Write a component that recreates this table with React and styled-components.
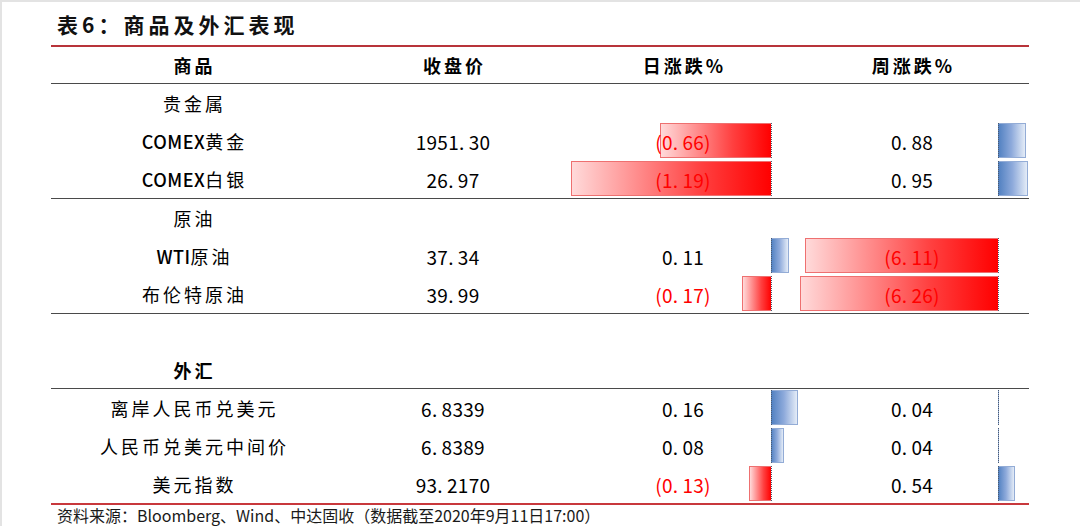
import React from "react";
import styled, { createGlobalStyle } from "styled-components";

const GlobalStyle = createGlobalStyle`
  html, body { margin: 0; padding: 0; background: #ffffff; }
  body { font-family: "Noto Sans CJK SC", "Noto Sans", sans-serif; color: #000; }
  * { box-sizing: border-box; }
`;

const COLS = "284px 236px 224px 234px";
const DAY_AXIS = 200;
const DAY_SCALE = 168;
const WEEK_AXIS = 203;
const WEEK_SCALE = 31.6;

const Page = styled.div`
  width: 1080px;
  height: 526px;
  overflow: hidden;
  border-top: 2px solid #e3e3e3;
  border-left: 2px solid #e3e3e3;
  padding-left: 49px;
  display: flex;
  flex-direction: column;
`;

const Title = styled.div`
  height: 43px;
  display: flex;
  align-items: center;
  padding-left: 6px;
  font-size: 21px;
  font-weight: 700;
  letter-spacing: 4px;
  color: #111;
`;

const Table = styled.div`
  width: 978px;
  border-top: 2px solid #b8343a;
  border-bottom: 2px solid #c8383c;
  display: flex;
  flex-direction: column;
`;

const HeaderRow = styled.div`
  display: grid;
  grid-template-columns: ${COLS};
  height: 37px;
  border-bottom: 1px solid #4a4a4a;
  align-items: center;
`;

const HeadCell = styled.div`
  text-align: center;
  font-size: 18px;
  font-weight: 700;
  letter-spacing: 3px;
  padding-left: 3px;
`;

const Section = styled.div`
  display: flex;
  flex-direction: column;
  border-bottom: ${(p) => (p.$last ? "none" : "1px solid #4a4a4a")};
`;

const Row = styled.div`
  display: grid;
  grid-template-columns: ${COLS};
  height: ${(p) => p.$h}px;
  align-items: stretch;
`;

const LabelCell = styled.div`
  display: flex;
  align-items: center;
  justify-content: center;
  font-size: 18px;
  font-weight: ${(p) => (p.$bold ? 700 : 400)};
  letter-spacing: 3px;
  padding-left: 3px;
`;

const Latin = styled.span`
  letter-spacing: 0.5px;
  font-weight: 500;
`;

const NumCell = styled.div`
  position: relative;
  display: flex;
  align-items: center;
  justify-content: center;
  font-size: 19px;
  letter-spacing: 0.3px;
  color: ${(p) => (p.$neg ? "#ff0000" : "#000")};
`;

const NumText = styled.span`
  position: relative;
  z-index: 2;
`;

const Dot = styled.span`
  margin-right: 4px;
`;

const Bar = styled.div`
  position: absolute;
  top: 1px;
  bottom: 2px;
  z-index: 1;
  ${(p) =>
    p.$neg
      ? `right: calc(100% - ${p.$axis}px);
         background: linear-gradient(to left, #ff0000 0%, #ff4040 35%, #ffdada 100%);
         border: 1px solid #ee7070;
         border-right: none;`
      : `left: ${p.$axis}px;
         background: linear-gradient(to right, #4f7fc0 0%, #8eaadb 50%, #e4ecf7 100%);
         border: 1px solid #93acd6;
         border-left: none;`}
`;

const Axis = styled.div`
  position: absolute;
  top: 1px;
  bottom: 2px;
  left: ${(p) => p.$axis}px;
  width: 0;
  border-left: 1px dotted #4a5a70;
  z-index: 1;
`;

const Footer = styled.div`
  height: 20px;
  display: flex;
  align-items: center;
  padding-left: 6px;
  font-size: 16px;
  color: #1a1a1a;
  white-space: nowrap;
`;

function Num({ text }) {
  const i = text.indexOf(".");
  return (
    <NumText>
      {text.slice(0, i)}
      <Dot>.</Dot>
      {text.slice(i + 1)}
    </NumText>
  );
}

const fmt = (v) => (v < 0 ? `(${Math.abs(v).toFixed(2)})` : v.toFixed(2));

function ValueCell({ v, axis, scale }) {
  const w = Math.max(Math.abs(v) * scale, 1);
  return (
    <NumCell $neg={v < 0}>
      <Bar $neg={v < 0} $axis={axis} style={{ width: `${w}px` }} />
      <Axis $axis={axis} />
      <Num text={fmt(v)} />
    </NumCell>
  );
}

function Label({ text, bold }) {
  const m = text.match(/^([A-Z]+)(.*)$/);
  return (
    <LabelCell $bold={bold}>
      {m ? (
        <>
          <Latin>{m[1]}</Latin>
          {m[2]}
        </>
      ) : (
        text
      )}
    </LabelCell>
  );
}

const sections = [
  {
    h: 38,
    rows: [
      { label: "贵金属" },
      { label: "COMEX黄金", price: "1951.30", d: -0.66, w: 0.88 },
      { label: "COMEX白银", price: "26.97", d: -1.19, w: 0.95 },
    ],
  },
  {
    h: 38,
    rows: [
      { label: "原油" },
      { label: "WTI原油", price: "37.34", d: 0.11, w: -6.11 },
      { label: "布伦特原油", price: "39.99", d: -0.17, w: -6.26 },
    ],
  },
  {
    h: 37,
    rows: [{ label: "" }, { label: "外汇", bold: true }],
  },
  {
    h: 38,
    last: true,
    rows: [
      { label: "离岸人民币兑美元", price: "6.8339", d: 0.16, w: 0.04 },
      { label: "人民币兑美元中间价", price: "6.8389", d: 0.08, w: 0.04 },
      { label: "美元指数", price: "93.2170", d: -0.13, w: 0.54 },
    ],
  },
];

export default function App() {
  return (
    <>
      <GlobalStyle />
      <Page>
        <Title>表6：商品及外汇表现</Title>
        <Table>
          <HeaderRow>
            <HeadCell>商品</HeadCell>
            <HeadCell>收盘价</HeadCell>
            <HeadCell>日涨跌%</HeadCell>
            <HeadCell>周涨跌%</HeadCell>
          </HeaderRow>
          {sections.map((s, si) => (
            <Section key={si} $last={s.last}>
              {s.rows.map((r, ri) => (
                <Row key={ri} $h={s.h}>
                  <Label text={r.label} bold={r.bold} />
                  {r.price ? (
                    <>
                      <NumCell>
                        <Num text={r.price} />
                      </NumCell>
                      <ValueCell v={r.d} axis={DAY_AXIS} scale={DAY_SCALE} />
                      <ValueCell v={r.w} axis={WEEK_AXIS} scale={WEEK_SCALE} />
                    </>
                  ) : (
                    <>
                      <div />
                      <div />
                      <div />
                    </>
                  )}
                </Row>
              ))}
            </Section>
          ))}
        </Table>
        <Footer>资料来源：Bloomberg、Wind、中达固收（数据截至2020年9月11日17:00）</Footer>
      </Page>
    </>
  );
}
